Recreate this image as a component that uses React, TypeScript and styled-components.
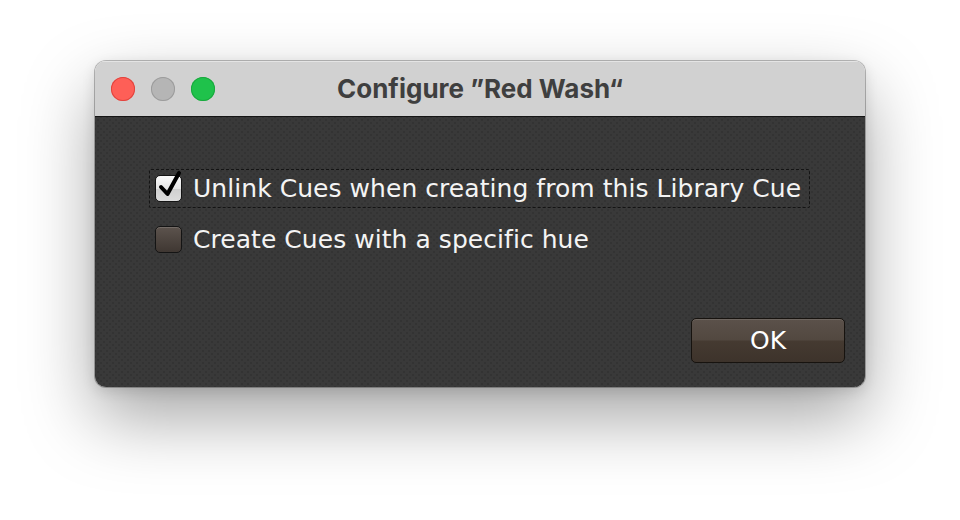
import styled, { createGlobalStyle } from "styled-components";

const GlobalStyle = createGlobalStyle`
  html, body {
    margin: 0;
    padding: 0;
    background: #ffffff;
  }
`;

const Page = styled.div`
  width: 960px;
  height: 520px;
  padding: 61px 0 0 95px;
  box-sizing: border-box;
  overflow: hidden;
`;

const Window = styled.div`
  width: 770px;
  height: 326px;
  border-radius: 11px;
  overflow: hidden;
  display: flex;
  flex-direction: column;
  box-shadow: 0 30px 70px rgba(0, 0, 0, 0.36), 0 4px 14px rgba(0, 0, 0, 0.12),
    0 0 0 1px rgba(0, 0, 0, 0.25);
`;

const TitleBar = styled.div`
  height: 56px;
  flex: none;
  display: flex;
  align-items: center;
  position: relative;
  background: #d1d1d1;
  border-top: 1px solid #e4e4e4;
  border-bottom: 1px solid #151515;
  box-sizing: border-box;
  padding-left: 16px;
`;

const Lights = styled.div`
  display: flex;
  gap: 16px;
`;

const Light = styled.span<{ $fill: string; $edge: string }>`
  width: 24px;
  height: 24px;
  border-radius: 50%;
  background: ${(p) => p.$fill};
  box-shadow: inset 0 0 0 1px ${(p) => p.$edge};
`;

const Title = styled.div`
  position: absolute;
  left: 0;
  right: 0;
  top: 12px;
  text-align: center;
  font-family: Inter, "Liberation Sans", sans-serif;
  font-weight: 700;
  font-size: 26px;
  line-height: 30px;
  color: #3f3f3f;
  pointer-events: none;
`;

const Body = styled.div`
  flex: 1;
  position: relative;
  background-color: #393939;
  background-image: radial-gradient(circle, #333333 1px, transparent 1.3px),
    radial-gradient(circle, #333333 1px, transparent 1.3px);
  background-size: 6px 6px;
  background-position: 0 0, 3px 3px;
  padding: 52px 0 0 54px;
  box-sizing: border-box;
  display: flex;
  flex-direction: column;
  gap: 12px;
`;

const Option = styled.label<{ $focused?: boolean }>`
  display: flex;
  align-items: center;
  gap: 11px;
  align-self: flex-start;
  height: 39px;
  padding: 0 8px 0 5px;
  box-sizing: border-box;
  border: 1px dashed ${(p) => (p.$focused ? "#141414" : "transparent")};
  border-radius: 2px;
  font-family: "DejaVu Sans", Verdana, sans-serif;
  font-size: 25px;
  line-height: 30px;
  letter-spacing: 0.05px;
  color: #f4f4f4;
`;

const Box = styled.span<{ $checked?: boolean }>`
  position: relative;
  width: 27px;
  height: 27px;
  flex: none;
  border-radius: 5px;
  box-sizing: border-box;
  border: 1px solid #141414;
  background: ${(p) =>
    p.$checked
      ? "linear-gradient(#fbfbfb 0%, #e6e6e6 50%, #cfcfcf 51%, #dcdcdc 100%)"
      : "linear-gradient(#5c534d, #3f3732)"};
  box-shadow: inset 0 1px 0 rgba(255, 255, 255, 0.15);
`;

const Check = styled.svg`
  position: absolute;
  left: 2px;
  top: -6px;
  width: 24px;
  height: 28px;
`;

const Footer = styled.div`
  position: absolute;
  right: 20px;
  bottom: 24px;
`;

const Button = styled.button`
  width: 154px;
  height: 45px;
  border-radius: 5px;
  border: 1px solid #17130f;
  background: linear-gradient(#5b514a 0%, #524840 48%, #453a31 52%, #3d332b 100%);
  box-shadow: inset 0 1px 0 rgba(255, 255, 255, 0.12);
  color: #ffffff;
  font-family: "DejaVu Sans", Verdana, sans-serif;
  font-size: 25px;
  padding: 0;
`;

function Checkbox({ checked }: { checked?: boolean }) {
  return (
    <Box $checked={checked}>
      {checked && (
        <Check viewBox="0 0 24 28">
          <path
            d="M3 17 L9.5 24 L21 3"
            fill="none"
            stroke="#000"
            strokeWidth="4"
            strokeLinecap="round"
            strokeLinejoin="round"
          />
        </Check>
      )}
    </Box>
  );
}

export default function App() {
  return (
    <>
      <GlobalStyle />
      <Page>
        <Window>
          <TitleBar>
            <Lights>
              <Light $fill="#fe5f57" $edge="#e0443e" />
              <Light $fill="#b5b5b5" $edge="#9c9c9c" />
              <Light $fill="#1fc24b" $edge="#1aa83e" />
            </Lights>
            <Title>Configure ”Red Wash“</Title>
          </TitleBar>
          <Body>
            <Option $focused>
              <Checkbox checked />
              Unlink Cues when creating from this Library Cue
            </Option>
            <Option>
              <Checkbox />
              Create Cues with a specific hue
            </Option>
            <Footer>
              <Button>OK</Button>
            </Footer>
          </Body>
        </Window>
      </Page>
    </>
  );
}
